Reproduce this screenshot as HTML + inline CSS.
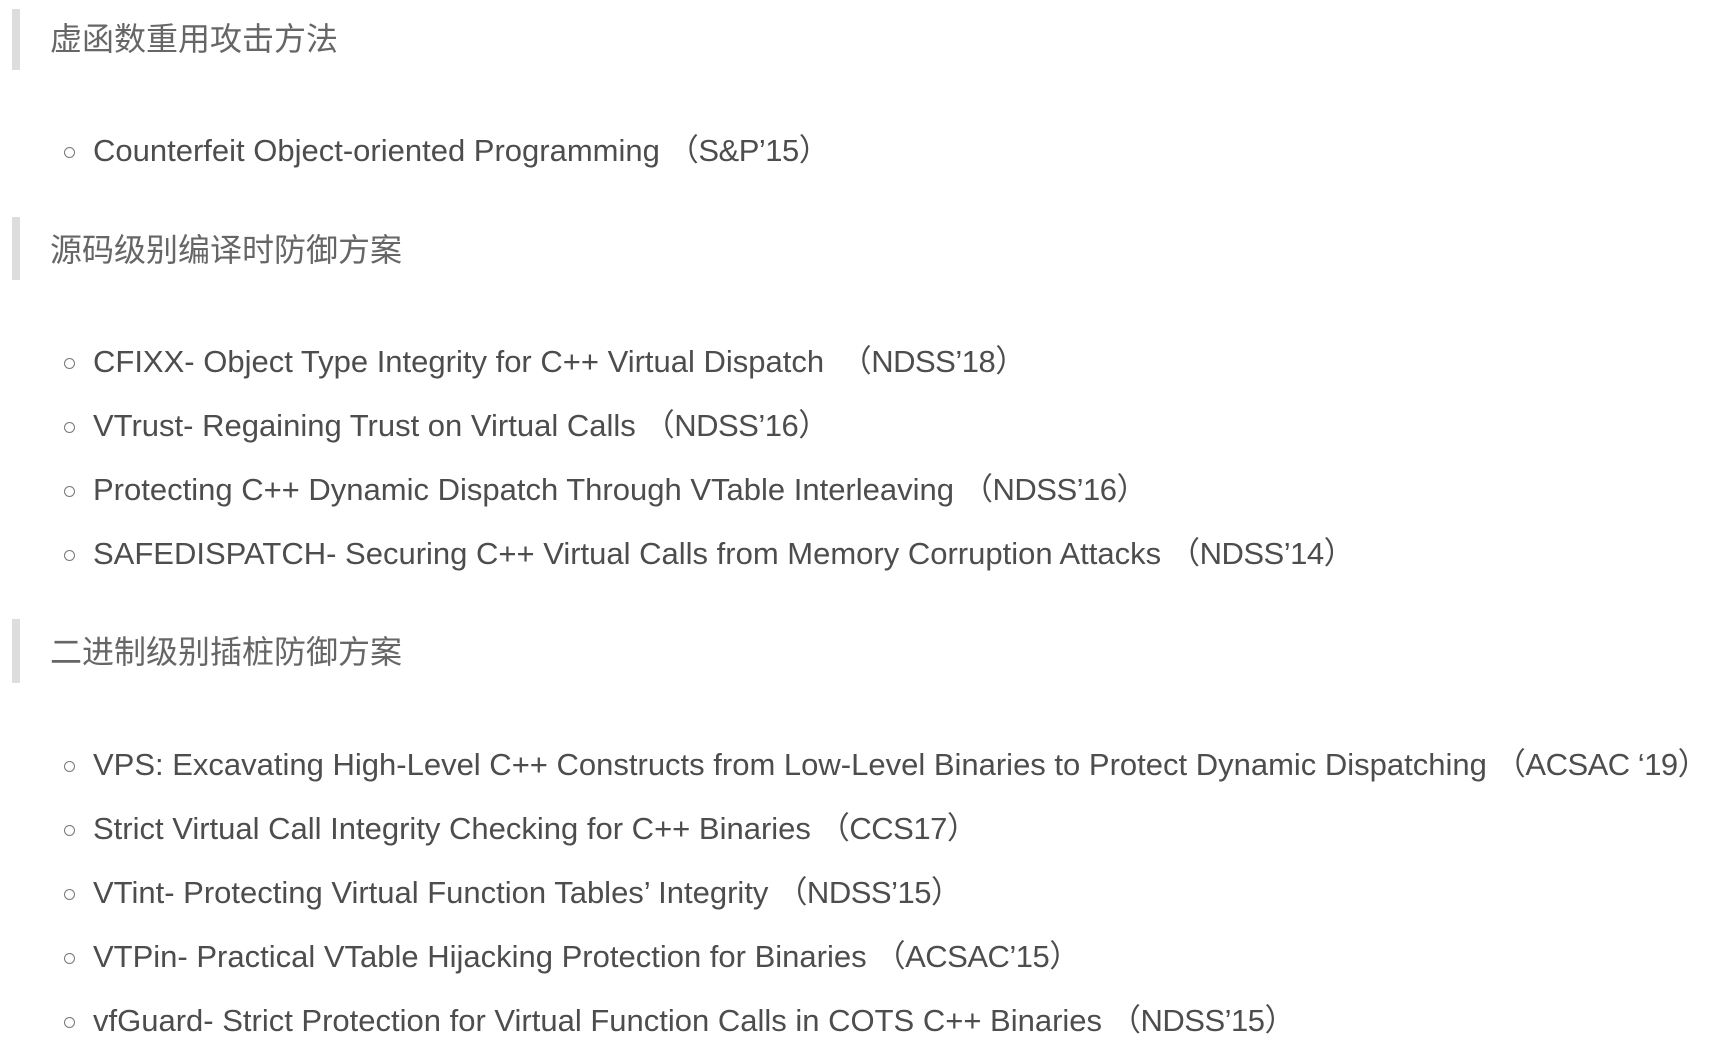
<!DOCTYPE html>
<html><head><meta charset="utf-8"><style>
html,body{margin:0;padding:0;background:#fff;width:1723px;height:1062px;overflow:hidden;position:relative}
.bar{position:absolute;left:12px;width:8px;background:#ddd}
.h{position:absolute;left:50px;font-family:"Liberation Sans","Noto Sans CJK SC",sans-serif;font-size:32px;color:#666;line-height:40px;white-space:nowrap}
.li{position:absolute;left:93px;font-family:"Liberation Sans","Noto Sans CJK SC",sans-serif;font-size:31px;color:#4d4d4d;line-height:40px;white-space:nowrap;letter-spacing:0px}
.p{letter-spacing:-0.5px;margin-left:8px}
.b{position:absolute;left:64px;width:9px;height:9px;border:1.3px solid #777;border-radius:50%}
</style></head><body>
<div class="bar" style="top:9px;height:61px"></div>
<div class="h" style="top:19px">虚函数重用攻击方法</div>
<div class="b" style="top:147px"></div>
<div class="li" style="top:131px">Counterfeit Object-oriented Programming<span class="p">（S&amp;P’15）</span></div>

<div class="bar" style="top:217px;height:63px"></div>
<div class="h" style="top:230px">源码级别编译时防御方案</div>
<div class="b" style="top:358px"></div>
<div class="li" style="top:342px">CFIXX- Object Type Integrity for C++ Virtual Dispatch <span class="p">（NDSS’18）</span></div>
<div class="b" style="top:422px"></div>
<div class="li" style="top:406px">VTrust- Regaining Trust on Virtual Calls<span class="p">（NDSS’16）</span></div>
<div class="b" style="top:486px"></div>
<div class="li" style="top:470px">Protecting C++ Dynamic Dispatch Through VTable Interleaving<span class="p">（NDSS’16）</span></div>
<div class="b" style="top:550px"></div>
<div class="li" style="top:534px">SAFEDISPATCH- Securing C++ Virtual Calls from Memory Corruption Attacks<span class="p">（NDSS’14）</span></div>

<div class="bar" style="top:619px;height:64px"></div>
<div class="h" style="top:632px">二进制级别插桩防御方案</div>
<div class="b" style="top:761px"></div>
<div class="li" style="top:745px">VPS: Excavating High-Level C++ Constructs from Low-Level Binaries to Protect Dynamic Dispatching<span class="p">（ACSAC ‘19）</span></div>
<div class="b" style="top:825px"></div>
<div class="li" style="top:809px">Strict Virtual Call Integrity Checking for C++ Binaries<span class="p">（CCS17）</span></div>
<div class="b" style="top:889px"></div>
<div class="li" style="top:873px">VTint- Protecting Virtual Function Tables’ Integrity<span class="p">（NDSS’15）</span></div>
<div class="b" style="top:953px"></div>
<div class="li" style="top:937px">VTPin- Practical VTable Hijacking Protection for Binaries<span class="p">（ACSAC’15）</span></div>
<div class="b" style="top:1017px"></div>
<div class="li" style="top:1001px">vfGuard- Strict Protection for Virtual Function Calls in COTS C++ Binaries<span class="p">（NDSS’15）</span></div>
</body></html>
